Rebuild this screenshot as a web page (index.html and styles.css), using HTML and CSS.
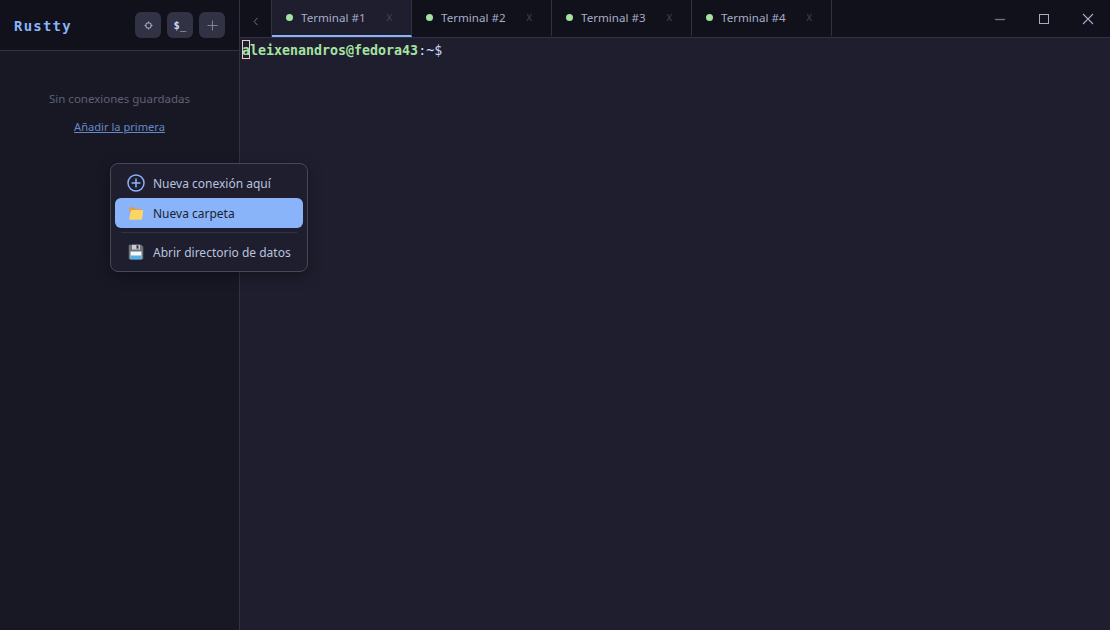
FILE: index.html
```html
<!DOCTYPE html>
<html lang="es">
<head>
<meta charset="utf-8">
<title>Rustty</title>
<link rel="stylesheet" href="styles.css">
</head>
<body>
<div class="app">
  <aside class="sidebar">
    <header class="side-head">
      <span class="brand">Rustty</span>
      <div class="side-actions">
        <button class="icon-btn"><svg width="9" height="9" viewBox="0 0 9 9" class="glyph gear"><rect x="2" y="2" width="5" height="5" rx="1.6" fill="none" stroke="currentColor" stroke-width="1.1"/><path d="M4.5 0.5V2M4.5 7V8.5M0.5 4.5H2M7 4.5H8.5" stroke="currentColor" stroke-width="1"/></svg></button>
        <button class="icon-btn prompt">$<span class="under">_</span></button>
        <button class="icon-btn"><svg width="11" height="11" viewBox="0 0 11 11" class="glyph dim"><path d="M5.5 0.5V10.5M0.5 5.5H10.5" stroke="currentColor" stroke-width="1"/></svg></button>
      </div>
    </header>
    <div class="empty">
      <p class="empty-text">Sin conexiones guardadas</p>
      <a class="empty-link" href="#">Añadir la primera</a>
    </div>
  </aside>
  <main class="main">
    <nav class="tabbar">
      <button class="tab-back"><svg width="6" height="9" viewBox="0 0 6 9"><path d="M4.5 0.8L1.2 4.5L4.5 8.2" fill="none" stroke="currentColor" stroke-width="1"/></svg></button>
      <div class="tab active"><span class="dot"></span><span class="tab-title">Terminal #1</span><span class="tab-x">X</span></div>
      <div class="tab"><span class="dot"></span><span class="tab-title">Terminal #2</span><span class="tab-x">X</span></div>
      <div class="tab"><span class="dot"></span><span class="tab-title">Terminal #3</span><span class="tab-x">X</span></div>
      <div class="tab"><span class="dot"></span><span class="tab-title">Terminal #4</span><span class="tab-x">X</span></div>
      <div class="win-controls">
        <button class="win-btn"><svg width="12" height="12" viewBox="0 0 12 12"><path d="M1 6.5H11" stroke="#6c7086" stroke-width="1.4"/></svg></button>
        <button class="win-btn"><svg width="12" height="12" viewBox="0 0 12 12"><rect x="1.5" y="1.5" width="9" height="9" fill="none" stroke="#a6adc8" stroke-width="1"/></svg></button>
        <button class="win-btn"><svg width="12" height="12" viewBox="0 0 12 12"><path d="M1 1L11 11M11 1L1 11" stroke="#a6adc8" stroke-width="1.1"/></svg></button>
      </div>
    </nav>
    <section class="terminal"><span class="cursor-cell"><span class="cursor"></span><b class="user first">a</b></span><b class="user">leixenandros@fedora43</b><span class="path">:~$</span></section>
  </main>
  <div class="menu">
    <div class="menu-item"><svg class="menu-icon" width="18" height="18" viewBox="0 0 18 18"><circle cx="9" cy="9" r="8" fill="none" stroke="#89b4fa" stroke-width="1.5"/><path d="M9 4.6V13.4M4.6 9H13.4" stroke="#89b4fa" stroke-width="1.5"/></svg><span>Nueva conexión aquí</span></div>
    <div class="menu-item selected"><svg class="menu-icon" width="15" height="14" viewBox="0 0 15 14"><path d="M1 3A1.5 1.5 0 0 1 2.5 1.2H5L6.6 3H12.5A1 1 0 0 1 13.5 4V6H1Z" fill="#e59d37"/><path d="M0.6 13L2.4 4.8A1 1 0 0 1 3.4 4H14A0.7 0.7 0 0 1 14.7 4.8L13.6 13A1 1 0 0 1 12.6 13.8H1.4A0.8 0.8 0 0 1 0.6 13Z" fill="#fbd566"/></svg><span>Nueva carpeta</span></div>
    <div class="menu-sep"></div>
    <div class="menu-item"><svg class="menu-icon" width="15" height="15" viewBox="0 0 15 15"><path d="M0 1A1 1 0 0 1 1 0H12.5L15 2.5V14A1 1 0 0 1 14 15H1A1 1 0 0 1 0 14Z" fill="#6f7278"/><rect x="3.5" y="0" width="8" height="5" fill="#c9ccd2"/><rect x="8" y="0.8" width="2" height="3.4" fill="#33363d"/><rect x="2" y="7" width="11" height="8" fill="#f6f7f9"/><rect x="2" y="11" width="11" height="4" fill="#4fb1ea"/></svg><span>Abrir directorio de datos</span></div>
  </div>
</div>
</body>
</html>
```

FILE: styles.css
```css
* { box-sizing: border-box; }
html, body { margin: 0; height: 100%; overflow: hidden; }
body { background: #1e1e2e; color: #cdd6f4; font-family: "Noto Sans", sans-serif; font-size: 12px; }
button { border: 0; padding: 0; background: none; color: inherit; font: inherit; }

.app { position: relative; display: flex; width: 1110px; height: 630px; }

.sidebar { width: 240px; flex: none; background: #181825; border-right: 1px solid #313244; display: flex; flex-direction: column; }
.side-head { height: 51px; flex: none; background: #11111b; border-bottom: 1px solid #313244; display: flex; align-items: center; justify-content: space-between; padding: 0 14px; }
.brand { font-family: "DejaVu Sans Mono", monospace; font-weight: 700; font-size: 14px; letter-spacing: 1.2px; color: #89b4fa; padding-top: 2px; }
.side-actions { display: flex; gap: 6px; }
.icon-btn { width: 26px; height: 26px; border-radius: 6px; background: #313244; color: #cdd6f4; display: flex; align-items: center; justify-content: center; }
.prompt { font-family: "DejaVu Sans Mono", monospace; font-weight: 700; font-size: 10.5px; letter-spacing: 0.2px; }
.under { font-weight: 400; }
.glyph { display: block; }
.gear { color: #a6adc8; }
.dim { color: #7f849c; }

.empty { display: flex; flex-direction: column; align-items: center; padding-top: 40px; }
.empty-text { margin: 0 0 11px; font-size: 11.5px; line-height: 16px; color: #5e6175; }
.empty-link { font-size: 11.1px; line-height: 17px; color: #6488c8; text-decoration: underline; }

.main { flex: 1; min-width: 0; display: flex; flex-direction: column; }
.tabbar { height: 38px; flex: none; background: #11111b; border-bottom: 1px solid #313244; display: flex; }
.tab-back { width: 32px; flex: none; display: flex; align-items: center; justify-content: center; color: #6c7086; border-right: 1px solid #313244; padding-top: 5px; }
.tab { width: 140px; flex: none; border-right: 1px solid #313244; display: flex; align-items: center; padding: 0 19px 0 14px; color: #a6adc8; border-bottom: 2px solid transparent; }
.tab.active { background: #1e1e2e; border-bottom-color: #89b4fa; }
.dot { width: 7px; height: 7px; border-radius: 50%; background: #a6e3a1; flex: none; margin-right: 8px; }
.tab-title { flex: 1; font-size: 11.6px; line-height: 18px; padding-top: 1px; white-space: nowrap; }
.tab-x { color: #45475a; font-size: 9.5px; line-height: 16px; }
.win-controls { margin-left: auto; display: flex; }
.win-btn { width: 44px; height: 37px; display: flex; align-items: center; justify-content: center; }

.terminal { padding: 5px 2px; font-family: "DejaVu Sans Mono", monospace; font-size: 13.3px; line-height: 16px; white-space: pre; }
.user { color: #a6e3a1; font-weight: 700; }
.path { color: #cdd6f4; }
.cursor-cell { position: relative; display: inline-block; }
.first { position: relative; }
.cursor { position: absolute; left: 0; top: -3px; width: 8px; height: 19px; border: 1px solid #e8cfc8; }

.menu { position: absolute; left: 110px; top: 163px; width: 198px; height: 109px; padding: 4px; background: #1e1e2e; border: 1px solid #45475a; border-radius: 8px; box-shadow: 0 4px 14px rgba(0,0,0,.35); }
.menu-item { height: 30px; display: flex; align-items: center; padding-left: 38px; position: relative; border-radius: 6px; color: #bac2de; font-size: 12px; white-space: nowrap; }
.menu-item.selected { background: #89b4fa; color: #1e1e2e; }
.menu-icon { position: absolute; left: 21px; top: 50%; transform: translate(-50%, -50%); }
.menu-sep { height: 1px; background: #313244; margin: 4px 6px 4px; }
```
